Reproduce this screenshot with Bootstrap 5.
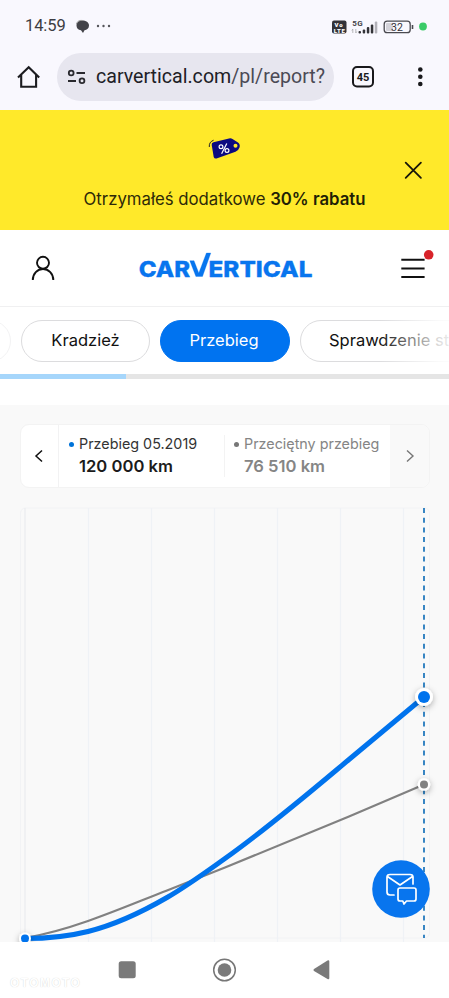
<!DOCTYPE html>
<html lang="pl">
<head>
<meta charset="utf-8">
<meta name="viewport" content="width=device-width, initial-scale=1">
<title>carVertical – Przebieg</title>
<link href="https://cdn.jsdelivr.net/npm/bootstrap@5.3.0/dist/css/bootstrap.min.css" rel="stylesheet">
<style>
body{font-family:Inter,"Liberation Sans",sans-serif;background:#fff;color:#111;width:449px;height:998px;overflow:hidden}
svg{display:block;flex:none}
.phone-top{background:#f9f8fe;height:110px;font-family:Roboto,sans-serif}
.status{height:53px;padding:0 21px 0 25px}
.clock{font-size:16.5px;color:#3d3d42;letter-spacing:-.1px}
.toolbar{height:57px;padding:0 23px 9px 17px}
.omnibox{width:277px;height:48px;background:#e7e6ef;margin-left:16px;padding-left:10px}
.url{font-size:19.6px;color:#202026;width:229px;letter-spacing:0;margin-left:10px}
.url span{color:#4b4a55}
.promo{background:#ffe92a;height:120px}
.promo-text{font-size:16.75px;color:#2d2908;padding-top:1px}
.promo-text b{font-weight:600;color:#221e05}
.site-head{height:77px;padding:0 15px 0 30px;border-bottom:1px solid #f0f0f1}
.brand{margin:-4px 4px 0 0}
.burger{margin-top:-8px}
.chips{height:67px;padding-left:21px;gap:10px}
.chip{height:42px;border:1px solid #dcdcde;font-size:16.5px;line-height:1;flex:none;background:#fff}
.chip.on{background:#0073f0;border-color:#0073f0;color:#fff;padding-right:2px}
.c1{width:129px}.c2{width:130px}.c3{width:190px;padding-left:28px}
.stub{left:-80px;top:13px;width:91px;border-color:#f3f3f4}
.fade-r{right:0;top:0;width:70px;height:66px;background:linear-gradient(90deg,#fff0,#ffffffd8 85%,#ffffffe8)}
.track{height:5px;background:#e5e5e5}
.track div{width:126px;height:5px;background:#a6d6fb}
.report{background:#f9f9f9;height:537px;margin-top:26px;padding-top:19px}
.panel{height:64px;width:410px;margin-left:20px;border-radius:9px;border:1px solid #f3f3f3;background:#fff;overflow:hidden}
.step{width:38px;flex:none;padding-right:2px}
.step.prev{border-right:1px solid #f2f2f3}
.step.next{background:#f9f9f9;width:41px}
.lab{font-size:14.35px;line-height:20px;color:#333;white-space:nowrap}
.val{font-size:16.6px;line-height:21px;font-weight:600;color:#1b1b1b;padding-left:10px;margin-top:2px}
.dot{width:5px;height:5px;background:#0073d9;margin-right:5px;flex:none}
.reading{width:165px;padding:9px 0 0 10px;flex:none}
.muted{padding-left:9px}
.muted .lab,.muted .val{color:#858585}
.muted .dot{background:#777}
.sep{width:1px;height:42px;background:#f3f3f3;flex:none}
.chart{margin-top:16px}
.chat{left:372px;top:860px}
.sysnav{height:56px}
.stamp{left:10px;top:976px;font:bold 12px/14px "Liberation Sans",sans-serif;color:#fff;letter-spacing:1.4px;text-shadow:0 0 1px #ccc}
</style>
<script src="https://cdn.jsdelivr.net/npm/bootstrap@5.3.0/dist/js/bootstrap.bundle.min.js"></script>
</head>
<body class="position-relative">
<header class="phone-top">
  <div class="status d-flex align-items-center justify-content-between">
    <div class="d-flex align-items-center">
      <span class="clock">14:59</span>
      <svg class="ms-2" width="37" height="16" viewBox="-1 0 37 16"><path d="M7 1.500c4 0 7 2 7 4.900s-2 4.500-4.500 4.800L8 14l-2-2.800C3 10.800 1.500 9 1.500 6.400S3.500 1.500 7 1.500z" fill="#434349"/><path d="M1.500 5C2 2 5 1 8 1.500" stroke="#999" fill="none"/><g fill="#55555b"><circle cx="23" cy="7" r="1.200"/><circle cx="28.500" cy="7" r="1.200"/><circle cx="34" cy="7" r="1.200"/></g></svg>
    </div>
    <svg width="97" height="18" viewBox="331 17 97 18" font-family="Roboto,sans-serif">
      <rect x="332" y="19.500" width="14.500" height="13" rx="2" fill="#333338"/>
      <text x="334.500" y="25.500" font-size="6" font-weight="900" fill="#fff" textLength="8">Vo</text><text x="333.800" y="31.500" font-size="6" font-weight="900" fill="#fff" textLength="11">LTE</text>
      <text x="352.300" y="25" font-size="8" font-weight="700" fill="#444449" textLength="10.500">5G</text>
      <path d="M352.800 32v-4l-1 1.500M355.800 28v4l1-1.500" stroke="#aaa" stroke-width=".8" fill="none"/>
      <g fill="#333338"><rect x="358.500" y="30" width="2.500" height="2.500" rx="1"/><rect x="362.700" y="28.500" width="2.500" height="4" rx="1"/><rect x="366.800" y="26" width="2.500" height="6.500" rx="1"/><rect x="370.800" y="23.500" width="2.500" height="9" rx="1"/></g><rect x="374.800" y="20.500" width="2.500" height="12" rx="1" fill="#b3b2b9"/>
      <rect x="384.200" y="20.200" width="26" height="11.500" rx="3" fill="none" stroke="#4a4a50" stroke-width="1.300"/><rect x="386" y="22" width="7" height="8" rx="1" fill="#d4d3da"/><path d="M412.500 24v4" stroke="#4a4a50" stroke-width="1.600"/>
      <text x="397" y="29.800" font-size="10.500" text-anchor="middle" fill="#333338">32</text>
      <circle cx="423" cy="25.500" r="3.900" fill="#3bcb68"/>
    </svg>
  </div>
  <div class="toolbar d-flex align-items-center">
    <svg width="24" height="24" viewBox="17 65 24 24"><path d="M18 77.500L28.700 67.300 39.200 77.500M21.200 75v11.800h14.900V75" fill="none" stroke="#1c1c20" stroke-width="2.100"/></svg>
    <div class="omnibox rounded-pill d-flex align-items-center">
      <svg width="19" height="16" viewBox="67 69 19 16" fill="none" stroke="#29292e" stroke-width="1.800"><circle cx="71.200" cy="73" r="2.400"/><path d="M76.500 73h8.500M68 81h8"/><circle cx="82" cy="80.800" r="2.400"/></svg>
      <div class="url text-nowrap overflow-hidden">carvertical.com<span>/pl/report?v</span></div>
    </div>
    <svg class="ms-auto" width="76" height="24" viewBox="350 65 76 24"><rect x="353" y="67" width="20" height="19.500" rx="4" fill="none" stroke="#19191c" stroke-width="2"/><text x="363" y="80.800" font-family="Roboto,sans-serif" font-size="11" font-weight="700" text-anchor="middle" fill="#19191c">45</text><g fill="#19191c"><circle cx="420.300" cy="69.500" r="2.300"/><circle cx="420.300" cy="76.800" r="2.300"/><circle cx="420.300" cy="84" r="2.300"/></g></svg>
  </div>
</header>

<section class="promo position-relative d-flex flex-column align-items-center">
  <svg class="mt-4" width="34" height="28" viewBox="208 134 34 28"><path d="M213.500 142.200L229 138.500q2-.500 3.500.500l5.500 3.500q2.500 2 1.500 5t-4 4.300L216.500 158.500q-2.200.500-2.800-1.500L211.700 145q-.300-2.200 1.800-2.800z" fill="#0c0a80"/><circle cx="235.500" cy="145.800" r="2" fill="#ffe92a"/><path d="M209.300 147q-.500-5 4.300-6.800" fill="none" stroke="#222" stroke-width="1"/><g fill="none" stroke="#fff" stroke-width="1.200"><circle cx="221" cy="146.700" r="1.900"/><circle cx="227" cy="150.500" r="1.900"/><path d="M226.800 143.500l-5.200 10.300"/></g></svg>
  <div class="promo-text text-nowrap mt-4">Otrzymałeś dodatkowe <b>30% rabatu</b></div>
  <svg class="position-absolute top-50 end-0 translate-middle-y me-4" width="24" height="24" viewBox="401 158 24 24"><path d="M405.700 162.700l15.200 15.200M420.900 162.700l-15.200 15.200" stroke="#17150a" stroke-width="1.800" stroke-linecap="round"/></svg>
</section>

<nav class="site-head d-flex align-items-center justify-content-between">
  <svg width="26" height="28" viewBox="30 254 26 28" fill="none" stroke="#111" stroke-width="1.900"><circle cx="43" cy="262.800" r="6"/><path d="M32.800 280c0-6.300 4.600-11 10.200-11s10.300 4.700 10.300 11"/></svg>
  <svg class="brand" width="176" height="30" viewBox="138 252 176 30" font-family="Inter,sans-serif" font-weight="800" font-size="22" fill="#0875ee" stroke="#0875ee" stroke-width=".3"><text x="138.700" y="277.500" textLength="51.500" lengthAdjust="spacingAndGlyphs">CAR</text><path d="M189.800 261.700h4.200l4.800 12.300 7.600-20h4.400l-8.300 23.500h-6.600z"/><text x="208.500" y="277.500" textLength="104" lengthAdjust="spacingAndGlyphs">ERTICAL</text></svg>
  <svg class="burger" width="34" height="32" viewBox="400 248 34 32"><path d="M401.300 259.700h23.300M401.300 268.500h23.300M401.300 277h23.300" stroke="#111" stroke-width="1.900"/><circle cx="428.700" cy="254.800" r="4.800" fill="#d8232a"/></svg>
</nav>

<div class="position-relative overflow-hidden">
  <div class="chips d-flex align-items-center">
    <div class="chip stub rounded-pill position-absolute"></div>
    <div class="chip c1 rounded-pill d-flex align-items-center justify-content-center">Kradzież</div>
    <div class="chip c2 on rounded-pill d-flex align-items-center justify-content-center">Przebieg</div>
    <div class="chip c3 rounded-pill d-flex align-items-center text-nowrap">Sprawdzenie stanu</div>
  </div>
  <div class="fade-r position-absolute"></div>
  <div class="track"><div></div></div>
</div>

<main class="report">
  <div class="panel d-flex align-items-stretch">
    <div class="step prev d-flex align-items-center justify-content-center"><svg width="10" height="14" viewBox="0 0 10 14"><path d="M8 1.500L2 7l6 5.500" fill="none" stroke="#111" stroke-width="1.500"/></svg></div>
    <div class="reading"><div class="lab d-flex align-items-center"><span class="dot rounded-circle"></span>Przebieg 05.2019</div><div class="val">120 000 km</div></div>
    <div class="sep align-self-center"></div>
    <div class="reading muted"><div class="lab d-flex align-items-center"><span class="dot rounded-circle"></span>Przeciętny przebieg</div><div class="val">76 510 km</div></div>
    <div class="step next d-flex align-items-center justify-content-center"><svg width="10" height="14" viewBox="0 0 10 14"><path d="M2 1.500L8 7l-6 5.500" fill="none" stroke="#777" stroke-width="1.400"/></svg></div>
  </div>
  <svg class="chart" width="449" height="438" viewBox="0 504 449 438">
    <defs><filter id="sh" x="-100%" y="-100%" width="300%" height="300%"><feDropShadow dx="0" dy="2" stdDeviation="3" flood-opacity=".32"/></filter></defs>
    <rect x="20.500" y="508" width="409" height="430" rx="5" fill="none" stroke="#f2f3f5"/>
    <path d="M25 508v430" stroke="#eceef0" stroke-width="1.500"/>
    <path d="M88.500 508v434M151.500 508v434M214.500 508v434M277.500 508v434M340.500 508v434M403.500 508v434" stroke="#eff2f6" stroke-width="1.300"/>
    <path d="M424 508v430" stroke="#2379bd" stroke-width="1.800" stroke-dasharray="5 4.700"/>
    <path d="M25 938C48 934 68 928 88 921C114 912 140 901 167 890.500C186 883 206 875 225 867.500L349 816.500L424 784.500" fill="none" stroke="#818181" stroke-width="2.200"/>
    <path d="M25 938.500C46 938.500 68 936.500 88 931.500C116 924.500 142 912 167 897.500C187 886 206 872 225 858.500C268 828 309 793 349 759.500L424 697" fill="none" stroke="#0073ed" stroke-width="5"/>
    <circle cx="25" cy="938.500" r="6" fill="#fff" filter="url(#sh)"/><circle cx="25" cy="938.500" r="4" fill="#0073ed"/>
    <circle cx="424" cy="697" r="9" fill="#fff" filter="url(#sh)"/><circle cx="424" cy="697" r="6" fill="#0073ed"/>
    <circle cx="424" cy="784.500" r="6.300" fill="#fff" filter="url(#sh)"/><circle cx="424" cy="784.500" r="4" fill="#828282"/>
  </svg>
</main>

<svg class="chat position-absolute" width="58" height="58" viewBox="372 860 58 58"><circle cx="401" cy="889" r="28.800" fill="#0875ee"/><g fill="none" stroke="#fff" stroke-width="1.700" stroke-linejoin="round" stroke-linecap="round"><path d="M394 895h-4q-3 0-3-3v-15q0-2.500 3-2.500h20q3 0 3 2.500v7M387.500 876.500l12.500 8.500 12.500-8.500"/><path d="M400 888h14q2 0 2 2v9q0 2-2 2h-7.500l-2.500 3-1.200-3H400q-2 0-2-2v-9q0-2 2-2z"/></g></svg>

<footer class="sysnav bg-white">
  <svg width="449" height="56" viewBox="0 942 449 56" fill="#7a7a7a"><rect x="118.700" y="961.300" width="17" height="17" rx="2.500"/><circle cx="224.500" cy="970" r="10.800" fill="none" stroke="#777" stroke-width="1.500"/><circle cx="224.500" cy="970" r="6.800"/><path d="M314 969l13.500-8.500q1.800-.700 1.800 1v16.500q0 1.700-1.800 1L314 971q-1.200-1 0-2z"/></svg>
</footer>
<div class="stamp position-absolute">OTOMOTO</div>
</body>
</html>
